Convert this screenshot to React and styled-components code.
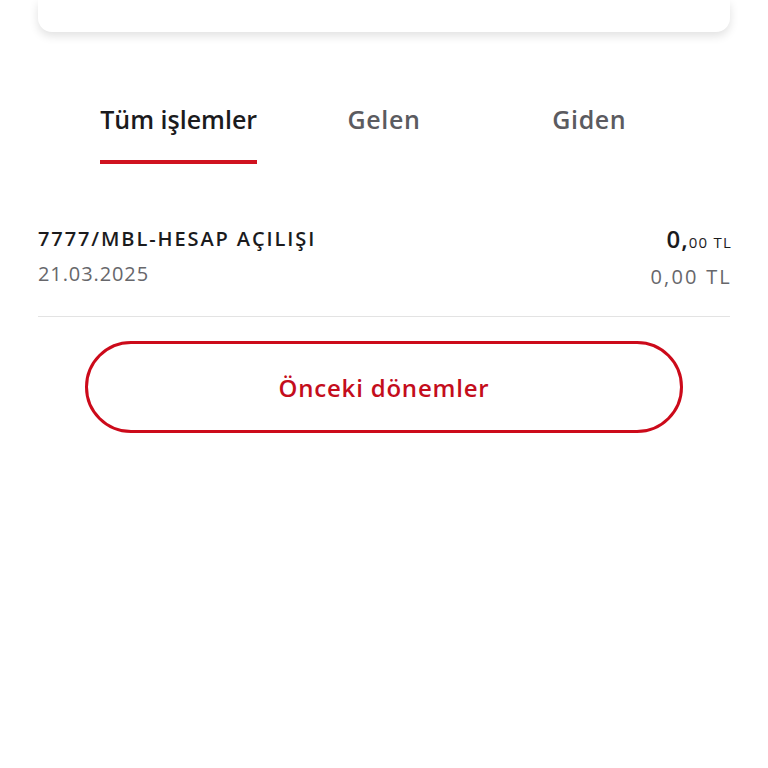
import React from 'react'
import styled, {createGlobalStyle} from 'styled-components'

const GlobalStyle = createGlobalStyle`
  body {
    margin: 0;
    background: #ffffff;
    font-family: "Open Sans", "Noto Sans", sans-serif;
  }
`

const Page = styled.div`
  padding: 0 38px;
`

const Card = styled.div`
  height: 32px;
  background: #fff;
  border-radius: 0 0 14px 14px;
  box-shadow: 0 4px 10px rgba(0, 0, 0, 0.12);
`

const Tabs = styled.div`
  display: grid;
  grid-template-columns: repeat(3, 1fr);
  margin: 69px 76px 0;
`

const Tab = styled.div`
  display: flex;
  justify-content: center;
`

const TabLabel = styled.div`
  font-size: 25px;
  font-weight: 600;
  letter-spacing: ${p => (p.active ? '0' : '0.6px')};
  color: ${p => (p.active ? '#1b1b1d' : '#5b5b60')};
  padding-bottom: 23px;
  border-bottom: 4px solid ${p => (p.active ? '#d0121f' : 'transparent')};
  line-height: 36px;
`

const Row = styled.div`
  display: flex;
  justify-content: space-between;
  padding: 61px 0 25px;
  border-bottom: 1px solid #e3e3e3;
`

const Col = styled.div`
  display: flex;
  flex-direction: column;
  align-items: ${p => (p.right ? 'flex-end' : 'flex-start')};
  margin-right: ${p => (p.right ? '-2px' : '0')};
  gap: 7px;
`

const Title = styled.div`
  font-size: 20px;
  font-weight: 600;
  letter-spacing: 1.9px;
  color: #1b1b1d;
  line-height: 28px;
`

const Sub = styled.div`
  font-size: 20px;
  letter-spacing: ${p => (p.wide ? '2.2px' : '0.9px')};
  color: #67676b;
  line-height: 28px;
`

const Amount = styled.div`
  font-weight: 600;
  color: #1b1b1d;
  line-height: 28px;
  font-size: 24px;
  letter-spacing: 1px;
`

const Small = styled.span`
  font-size: 15px;
  font-weight: 500;
  letter-spacing: 1.2px;
`

const Button = styled.button`
  display: block;
  width: 598px;
  height: 92px;
  margin: 24px auto 0;
  border: 3px solid #cc0a1a;
  border-radius: 46px;
  background: #fff;
  color: #c40d1c;
  font-family: "Open Sans", "Noto Sans", sans-serif;
  font-size: 24px;
  font-weight: 600;
  letter-spacing: 0.8px;
`

export default function App() {
  return (
    <>
      <GlobalStyle />
      <Page>
        <Card />
      </Page>
      <Tabs>
        <Tab><TabLabel active>Tüm işlemler</TabLabel></Tab>
        <Tab><TabLabel>Gelen</TabLabel></Tab>
        <Tab><TabLabel>Giden</TabLabel></Tab>
      </Tabs>
      <Page>
        <Row>
          <Col>
            <Title>7777/MBL-HESAP AÇILIŞI</Title>
            <Sub>21.03.2025</Sub>
          </Col>
          <Col right>
            <Amount>0,<Small>00 TL</Small></Amount>
            <Sub wide>0,00 TL</Sub>
          </Col>
        </Row>
      </Page>
      <Button>Önceki dönemler</Button>
    </>
  )
}
